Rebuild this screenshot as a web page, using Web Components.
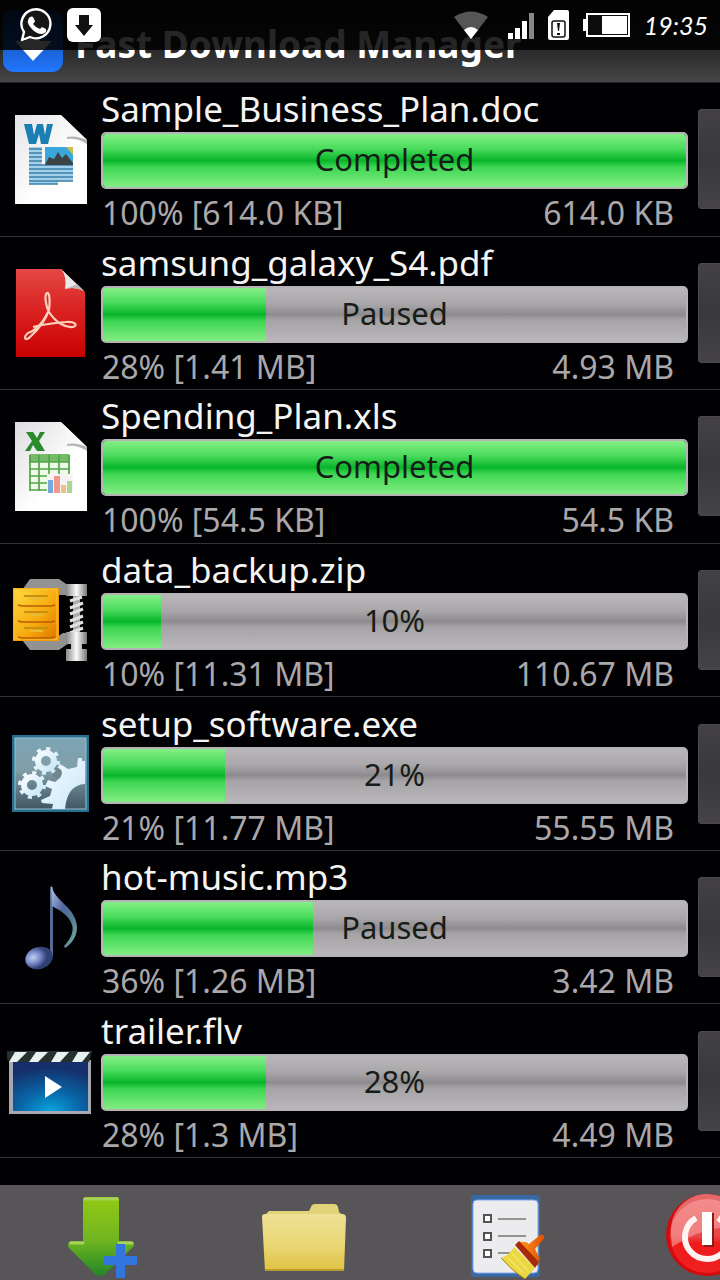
<!DOCTYPE html>
<html lang="en">
<head>
<meta charset="utf-8">
<meta name="viewport" content="width=device-width, initial-scale=1">
<title>Fast Download Manager</title>
<style>
    :root{
        --font-family:"Noto Sans", "Open Sans", sans-serif;
        --font-size-name:35px;
        --font-size-state:31px;
        --font-size-info:32px;
        --white:#f4f4f4;
        --gray:#aaa8aa;
    }

    body{
        margin:0;
        background:#010002;
        color:var(--white);
        font-family:var(--font-family);
    }
</style>
</head>
<body>
<download-app></download-app>

<script>
const FILE_ICONS = {
    doc:`
        <defs><linearGradient id="p" x2="1" y2="1"><stop stop-color="#e4e3e6"/><stop offset=".6" stop-color="#fff"/></linearGradient></defs>
        <path d="M15 6H61L87 31V95H15Z" fill="url(#p)"/>
        <path d="M67 27Q78 25 87 31V35Q78 29 67 30Z" fill="#b5b5b8"/>
        <path d="M61 6L87 31Q76 26 67 28Q69 13 61 6Z" fill="#f8f8f8"/>
        <path d="M24 15h8l2 11 3-11h6l2 11 2-11h6l-5 20h-7l-2-10-3 10h-7Z" fill="#1c7fb4"/>
        <path d="M29 38H42V56H73V72H58V75H29Z" fill="#a4d2ec"/>
        <path d="M29 40h13M29 44h13M29 48h13M29 52h13M29 56h44M29 60h44M29 64h44M29 68h44M29 72h44M29 75h29" stroke="#3c7fa8" stroke-width="1.4"/>
        <rect x="45" y="38" width="28" height="18" fill="#3aa6dc"/>
        <path d="M45 56L49 48 54 50 58 43 62 49 66 45 73 54V56Z" fill="#3b4344"/>
        <path d="M66 38h7v8Z" fill="#c9bd4c"/>`,
    pdf:`
        <defs><linearGradient id="p" x2="0" y2="1"><stop stop-color="#e34745"/><stop offset=".5" stop-color="#d8211f"/><stop offset="1" stop-color="#c90000"/></linearGradient></defs>
        <path d="M16 6H61L85 29V94H16Z" fill="url(#p)"/>
        <path d="M61 6L84 28Q75 23 65 26Q67 13 61 6Z" fill="#e9e9e9"/>
        <path d="M65 26Q75 23 84 28L77 21Q71 24 65 26Z" fill="#b7b7b7"/>
        <path d="M47 30C44 32 46 44 49 49C56 60 66 65 73 64C79 62 74 58 66 59C54 60 40 62 33 64M49 47C44 58 37 67 28 70C22 75 26 79 31 73C40 65 46 56 49 47C50 40 50 29 47 30" fill="none" stroke="#fbd0bd" stroke-width="2.2"/>`,
    xls:`
        <defs><linearGradient id="p" x2="1" y2="1"><stop stop-color="#dddcdf"/><stop offset=".6" stop-color="#fff"/></linearGradient></defs>
        <path d="M15 6H61L87 31V95H15Z" fill="url(#p)"/>
        <path d="M67 27Q78 25 87 31V35Q78 29 67 30Z" fill="#b5b5b8"/>
        <path d="M61 6L87 31Q76 26 67 28Q69 13 61 6Z" fill="#f8f8f8"/>
        <path d="M26 16h7l4 6 3-6h5l-6 9 6 10h-8l-4-6-3 6h-5l7-10Z" fill="#2b8b2c"/>
        <rect x="29" y="38" width="41" height="37" rx="2" fill="#effaeb"/>
        <path d="M29 46V40Q29 38 31 38H68Q70 38 70 40V46Z" fill="#74b968"/>
        <path d="M29 46h41M29 53h41M29 60h41M29 67h41M30 74h40M30 39v36M39 39v36M49 39v36M59 39v36M69 39v36" stroke="#51a548" stroke-width="1.7"/>
        <path d="M47 58h26v19h-26Z" fill="#f6f3f5"/>
        <path d="M48 64h5v13h-5Z" fill="#77aadb"/>
        <path d="M54 60h6v17h-6Z" fill="#ef988b"/>
        <path d="M61 69h5v8h-5Z" fill="#edc182"/>
        <path d="M67 65h5v12h-5Z" fill="#a9d596"/>`,
    zip:`
        <defs>
            <linearGradient id="g" x2="1" y2="1"><stop stop-color="#ffd63c"/><stop offset=".6" stop-color="#f5a70b"/><stop offset="1" stop-color="#e07b00"/></linearGradient>
            <linearGradient id="m"><stop stop-color="#888"/><stop offset=".5" stop-color="#fafafa"/><stop offset="1" stop-color="#777"/></linearGradient>
        </defs>
        <path d="M22 20L30 9H59L69 16V25H58L52 22V70L63 63H69V73L59 80H30L22 70Z" fill="#929293"/>
        <rect x="13" y="18" width="46" height="53" fill="#ef9b0b"/>
        <rect x="14" y="19" width="43" height="50" fill="url(#g)" stroke="#fbc63d"/>
        <path d="M17 22H55V34L51 36H21L17 34ZM17 38H55V50L51 52H21L17 50ZM17 54H55V66L51 68H21L17 66Z" fill="url(#g)"/>
        <path d="M18 35L22 36H51L55 35M18 51L22 52H51L55 51M18 67L22 68H51L55 67" fill="none" stroke="#b95c00" stroke-width="1.6"/>
        <path d="M24 26h24M24 42h24M24 58h24" stroke="#c69013" stroke-width="2"/>
        <path d="M30 29h13M30 45h13M30 61h13" stroke="#e8bd35" stroke-width="2"/>
        <rect x="73" y="23" width="7" height="46" fill="#aaa"/>
        <path d="M70 31L82 27M70 38L83 33M70 44L83 39M70 51L83 46M70 57L83 52M70 63L83 58" stroke="#e2e2e2" stroke-width="3"/>
        <path d="M66 14h21v12h-21ZM66 62h21v12h-21Z" fill="url(#m)"/>
        <path d="M71 74h11v5h5v12h-21v-12h5Z" fill="url(#m)"/>`,
    exe:`
        <defs>
            <linearGradient id="b" x2="0" y2="1"><stop stop-color="#7ca5b5"/><stop offset=".45" stop-color="#819da8"/><stop offset="1" stop-color="#405762"/></linearGradient>
            <linearGradient id="w" x2="1" y2="1"><stop stop-color="#f5fbff"/><stop offset="1" stop-color="#cae8f8"/></linearGradient>
        </defs>
        <rect x="12" y="11" width="77" height="77" fill="#276f8e"/>
        <rect x="15" y="14" width="71" height="71" fill="url(#b)" stroke="#9abfcd"/>
        <path d="M78 34H82V37H85V60Q67 61 65 85H52L53 80L42 79L41 76L50 72L52 65L45 62L48 56L55 58L61 53L57 45L60 40L68 45L77 43Z" fill="url(#w)"/>
        <circle cx="57" cy="49" r="5" fill="#6e8791"/>
        <g fill="none" stroke="url(#w)">
            <circle cx="46" cy="37" r="8" stroke-width="6"/>
            <circle cx="46" cy="37" r="12" stroke-width="4" stroke-dasharray="4 5.4"/>
            <circle cx="32" cy="61" r="8" stroke-width="6"/>
            <circle cx="32" cy="61" r="12" stroke-width="4" stroke-dasharray="4 5.4"/>
        </g>`,
    mp3:`
        <defs>
            <radialGradient id="n" cx=".3" cy=".4"><stop stop-color="#c4cdf0"/><stop offset=".5" stop-color="#7c90ce"/><stop offset="1" stop-color="#304174"/></radialGradient>
            <linearGradient id="f" x2="1" y2="1"><stop stop-color="#b4c7ec"/><stop offset=".4" stop-color="#52669f"/><stop offset=".7" stop-color="#537f91"/><stop offset="1" stop-color="#85b9a1"/></linearGradient>
        </defs>
        <path d="M50 10H53V80H50Z" fill="#546d90"/>
        <path d="M51 8C55 25 76 30 77 50C77 61 70 68 65 71L64 69C71 62 74 54 72 48C69 37 58 33 52 29Z" fill="url(#f)"/>
        <ellipse cx="39" cy="81" rx="14" ry="11" transform="rotate(-18 39 81)" fill="url(#n)"/>`,
    flv:`
        <defs>
            <radialGradient id="s" cx=".5" cy="1" r=".9"><stop stop-color="#08a5df"/><stop offset=".45" stop-color="#0966a7"/><stop offset="1" stop-color="#142f6a"/></radialGradient>
        </defs>
        <path d="M9 29H91V83H9Z" fill="#a6a9b1"/>
        <path d="M13 31H88V80H13Z" fill="url(#s)"/>
        <path d="M7 20H92L89 31H10L7 28Z" fill="#26302f"/>
        <path d="M15 21H27L17 31H9ZM36 21H48L38 31H29ZM57 21H69L60 31H51ZM78 21H90L82 31H72Z" fill="#e8f0f0"/>
        <path d="M45 45L62 56L45 67Z" fill="#fff"/>`
};

const ACTION_ICONS = {
    add:`
        <defs><linearGradient id="a" x2="0" y2="1"><stop stop-color="#93c913"/><stop offset=".55" stop-color="#70b522"/><stop offset="1" stop-color="#218626"/></linearGradient></defs>
        <path d="M29 10H60Q62 10 62 13V54H74Q79 56 76 60L48 87Q43 91 38 87L12 61Q9 56 14 54H26V13Q26 10 29 10Z" fill="url(#a)"/>
        <path d="M28 12H60M14 56H26M62 56H75" stroke="#a9d15b" stroke-width="3" stroke-linecap="round"/>
        <path d="M59 57H68V69H80V78H68V91H59V78H47V69H59Z" fill="#3275df"/>`,
    folder:`
        <defs><linearGradient id="y" x2="0" y2="1"><stop stop-color="#eee196"/><stop offset=".6" stop-color="#e8d56f"/><stop offset="1" stop-color="#dfc142"/></linearGradient></defs>
        <path d="M8 27L11 24H51L54 18Q55 17 58 17H76Q79 17 80 20L81 25L87 30V36H5Z" fill="#e2d37a"/>
        <path d="M4 30Q4 27 7 27H84Q88 27 88 31L86 84H7Z" fill="url(#y)"/>
        <path d="M7 83H86" stroke="#b89b2a" stroke-width="2"/>`,
    clean:`
        <defs><linearGradient id="h"><stop stop-color="#ff9f20"/><stop offset="1" stop-color="#e54d00"/></linearGradient></defs>
        <rect x="12" y="8" width="69" height="82" rx="3" fill="#3969a5"/>
        <rect x="14" y="13" width="65" height="73" rx="4" fill="#ececef" stroke="#7daaf1"/>
        <path d="M25 28h7v7h-7ZM25 46h7v7h-7ZM25 63h7v7h-7Z" fill="#fff" stroke="#535353" stroke-width="2"/>
        <path d="M39 32H67M39 49H67M39 66H51" stroke="#777" stroke-width="1.5"/>
        <path d="M80 49Q83 46 85 49Q86 51 83 54L76 62Q78 66 80 70L79 79L58 60L59 55Q67 54 70 57Z" fill="url(#h)"/>
        <path d="M56 58L60 54L80 75L76 81Z" fill="#a92a09"/>
        <path d="M55 60L76 81L66 92Q53 84 42 71Q51 68 55 60Z" fill="#ead742"/>
        <path d="M53 66L69 84M49 71L64 86" stroke="#f3e564" stroke-width="1.5"/>
        <path d="M42 71Q53 84 66 92" fill="none" stroke="#aa7e16"/>`,
    exit:`
        <defs><linearGradient id="r" x2="0" y2="1"><stop stop-color="#ef6a6a"/><stop offset=".5" stop-color="#e94646"/><stop offset=".6" stop-color="#ee1b1b"/><stop offset="1" stop-color="#f02121"/></linearGradient></defs>
        <circle cx="47" cy="48" r="41" fill="#d30a0e"/>
        <circle cx="47" cy="49" r="37" fill="url(#r)"/>
        <path d="M11 46A36 36 0 0 1 83 40Q45 37 12 60Z" fill="#f5a3a3" opacity=".6"/>
        <path d="M36 31A22 22 0 1 0 58 31" fill="none" stroke="#fff4f2" stroke-width="6"/>
        <path d="M44 26H54V60H44Z" fill="#8e1b1b"/>
        <path d="M42 25H52V58H42Z" fill="#fff"/>`
};

class StatusBar extends HTMLElement{

    constructor(){
        super();
        this.attachShadow({mode:"open"});
    }

    connectedCallback(){
        this.shadowRoot.innerHTML = /* html */`
            <style>
                :host{
                    display:flex;
                    align-items:center;
                    justify-content:space-between;
                    box-sizing:border-box;
                    height:50px;
                    padding:0 12px 0 20px;
                    background:rgba(0, 0, 0, .85);
                }

                .status__group{
                    display:flex;
                    align-items:center;
                    gap:14px;
                }

                .status__time{
                    font:italic 25px/50px Lato, sans-serif;
                    color:#fff;
                }

                svg{
                    display:block;
                }
            </style>
            <div class="status__group">
                <svg width="33" height="34" viewBox="0 0 33 34" aria-hidden="true">
                    <path d="M2 32L4 24A14.5 14.5 0 1 1 10 29Z" fill="#161616" stroke="#fff" stroke-width="2.4" stroke-linejoin="round"/>
                    <path d="M10 9Q12 8 13 9L15 13Q15 14 13 16Q16 20 20 21L22 19L26 21Q27 25 22 26Q16 26 11 20Q5 13 10 9Z" fill="#fff"/>
                </svg>
                <svg width="34" height="34" viewBox="0 0 34 34" aria-hidden="true">
                    <rect width="34" height="34" rx="6" fill="#fff"/>
                    <path d="M12 7H22V17H26L17 28L8 17H12Z" fill="#111"/>
                </svg>
            </div>
            <div class="status__group">
                <svg width="40" height="30" viewBox="0 0 40 30" aria-hidden="true">
                    <path d="M0 7Q17 -4 34 7L17 29Z" fill="#555"/>
                    <path d="M10 20Q17 14 24 20L17 29Z" fill="#fff"/>
                </svg>
                <svg width="26" height="28" viewBox="0 0 26 28" aria-hidden="true">
                    <path d="M0 22h5v6h-5ZM7 17h5v11h-5ZM14 10h5v18h-5Z" fill="#fff"/>
                    <path d="M21 2h5v26h-5Z" fill="#888"/>
                </svg>
                <svg width="21" height="30" viewBox="0 0 21 30" aria-hidden="true">
                    <path d="M6 0H19Q21 0 21 2V28Q21 30 19 30H2Q0 30 0 28V7Z" fill="#fff"/>
                    <rect x="4" y="11" width="13" height="16" rx="2" fill="#fff" stroke="#111" stroke-width="1.5"/>
                    <path d="M9 13h3l-1 8h-1ZM9 23h3v2h-3Z" fill="#111"/>
                </svg>
                <svg width="47" height="24" viewBox="0 0 47 24" aria-hidden="true">
                    <rect x="4" y="1" width="42" height="22" fill="#0c0c0c" stroke="#fff" stroke-width="2"/>
                    <path d="M0 6h4v12h-4ZM19 3h25v18h-25Z" fill="#fff"/>
                </svg>
                <span class="status__time">19:35</span>
            </div>
        `;
    }

}

class AppHeader extends HTMLElement{

    constructor(){
        super();
        this.attachShadow({mode:"open"});
    }

    connectedCallback(){
        this.shadowRoot.innerHTML = /* html */`
            <style>
                :host{
                    display:flex;
                    align-items:center;
                    gap:12px;
                    box-sizing:border-box;
                    height:83px;
                    padding-left:3px;
                    background:linear-gradient(#111 0%, #29292a 60%, #464547 100%);
                    border-bottom:1px solid #222;
                }

                svg{
                    display:block;
                    flex:none;
                }

                .header__title{
                    margin:0;
                    padding-top:6px;
                    font-size:37px;
                    line-height:48px;
                    font-weight:700;
                    white-space:nowrap;
                    color:#fff;
                }
            </style>
            <svg width="60" height="62" viewBox="0 0 60 62" aria-hidden="true">
                <defs><linearGradient id="k" x2="0" y2="1"><stop stop-color="#0a3987"/><stop offset="1" stop-color="#2277ff"/></linearGradient></defs>
                <rect width="60" height="62" rx="11" fill="url(#k)"/>
                <path d="M23 12H37V31H49L30 51L12 31H23Z" fill="#fff"/>
            </svg>
            <h1 class="header__title"><slot></slot></h1>
        `;
    }

}

class DownloadItem extends HTMLElement{

    constructor(){
        super();
        this.attachShadow({mode:"open"});
    }

    connectedCallback(){
        this.render();
    }

    render(){
        this.shadowRoot.innerHTML = this.#htmlTemplate;
    }

    static get #cssTemplateStyles(){
        return /* css */`
            :host{
                display:grid;
                grid-template-columns:101px minmax(0, 1fr) 22px;
                align-items:center;
                overflow:hidden;
                border-bottom:1px solid #343335;
            }

            .item__icon{
                display:block;
                width:100px;
                height:100px;
            }

            .item__body{
                margin-right:10px;
            }

            .item__name{
                margin:0;
                padding-top:3px;
                font-size:var(--font-size-name);
                line-height:46px;
                font-weight:400;
                white-space:nowrap;
            }

            .item__bar{
                display:grid;
                box-sizing:border-box;
                height:57px;
                border:2px solid #b5b3b5;
                border-radius:5px;
                overflow:hidden;
                background:linear-gradient(#b9b7b9, #a9a7a9 30%, #8d8b8d 50%, #a5a3a5 60%, #b9b7b9);
            }

            .item__fill{
                grid-area:1 / 1;
                background:linear-gradient(#85ef87, #49db5c 28%, #08b52a 50%, #3dd653 62%, #83ed82);
            }

            .item__state{
                grid-area:1 / 1;
                text-align:center;
                font-size:var(--font-size-state);
                line-height:51px;
                color:#171c18;
            }

            .item__info{
                display:flex;
                justify-content:space-between;
                padding:1px 14px 0 1px;
                font-size:var(--font-size-info);
                line-height:45px;
                white-space:nowrap;
                color:var(--gray);
            }

            .item__menu{
                width:100px;
                height:100px;
                padding:0;
                border:1px solid #4b494b;
                border-radius:3px;
                background:linear-gradient(#434143, #39383a 50%, #454345);
            }
        `;
    }

    get #htmlTemplate(){
        const { name, type, state, percent, loaded, total } = this.dataset;
        return /* html */`
            <style>${DownloadItem.#cssTemplateStyles}</style>
            <svg class="item__icon" viewBox="0 0 100 100" aria-hidden="true">${FILE_ICONS[type]}</svg>
            <div class="item__body">
                <h2 class="item__name">${name}</h2>
                <div class="item__bar" role="progressbar" aria-label="${name}" aria-valuenow="${percent}">
                    <div class="item__fill" style="width:${percent}%"></div>
                    <span class="item__state">${state}</span>
                </div>
                <div class="item__info">
                    <span>${percent}% [${loaded}]</span>
                    <span>${total}</span>
                </div>
            </div>
            <button class="item__menu" type="button" aria-label="Options for ${name}"></button>
        `;
    }

}

class ActionBar extends HTMLElement{

    constructor(){
        super();
        this.attachShadow({mode:"open"});
    }

    connectedCallback(){
        const actions = [["add", "Add download"], ["folder", "Open folder"], ["clean", "Clear list"], ["exit", "Exit"]];
        this.shadowRoot.innerHTML = /* html */`
            <style>
                :host{
                    display:flex;
                    box-sizing:border-box;
                    height:95px;
                    padding-left:2px;
                    overflow:hidden;
                    background:#575557;
                }

                .actions__button{
                    display:flex;
                    flex:0 0 28%;
                    align-items:center;
                    justify-content:center;
                    padding:0;
                    border:0;
                    background:none;
                }

                svg{
                    display:block;
                    width:92px;
                    height:92px;
                }
            </style>
            ${actions.map(([icon, label]) => `
                <button class="actions__button" type="button" aria-label="${label}">
                    <svg viewBox="0 0 92 92" aria-hidden="true">${ACTION_ICONS[icon]}</svg>
                </button>
            `).join("")}
        `;
    }

}

class DownloadApp extends HTMLElement{

    #downloads = [
        { name:"Sample_Business_Plan.doc", type:"doc", state:"Completed", percent:100, loaded:"614.0 KB", total:"614.0 KB" },
        { name:"samsung_galaxy_S4.pdf", type:"pdf", state:"Paused", percent:28, loaded:"1.41 MB", total:"4.93 MB" },
        { name:"Spending_Plan.xls", type:"xls", state:"Completed", percent:100, loaded:"54.5 KB", total:"54.5 KB" },
        { name:"data_backup.zip", type:"zip", state:"10%", percent:10, loaded:"11.31 MB", total:"110.67 MB" },
        { name:"setup_software.exe", type:"exe", state:"21%", percent:21, loaded:"11.77 MB", total:"55.55 MB" },
        { name:"hot-music.mp3", type:"mp3", state:"Paused", percent:36, loaded:"1.26 MB", total:"3.42 MB" },
        { name:"trailer.flv", type:"flv", state:"28%", percent:28, loaded:"1.3 MB", total:"4.49 MB" }
    ];

    constructor(){
        super();
        this.attachShadow({mode:"open"});
    }

    connectedCallback(){
        this.shadowRoot.innerHTML = /* html */`
            <style>
                :host{
                    display:flex;
                    flex-direction:column;
                    min-height:100vh;
                }

                /* the system bar is translucent and covers the top of the header */
                status-bar{
                    position:absolute;
                    top:0;
                    left:0;
                    right:0;
                }

                .app__list{
                    flex:1;
                    display:grid;
                    grid-auto-rows:1fr;
                    padding-bottom:27px;
                }
            </style>
            <app-header>Fast Download Manager</app-header>
            <status-bar></status-bar>
            <main class="app__list"></main>
            <action-bar></action-bar>
        `;
        const list = this.shadowRoot.querySelector(".app__list");
        for(const download of this.#downloads){
            const item = document.createElement("download-item");
            Object.assign(item.dataset, download);
            list.append(item);
        }
    }

}

customElements.define("status-bar", StatusBar);
customElements.define("app-header", AppHeader);
customElements.define("download-item", DownloadItem);
customElements.define("action-bar", ActionBar);
customElements.define("download-app", DownloadApp);
</script>
</body>
</html>
